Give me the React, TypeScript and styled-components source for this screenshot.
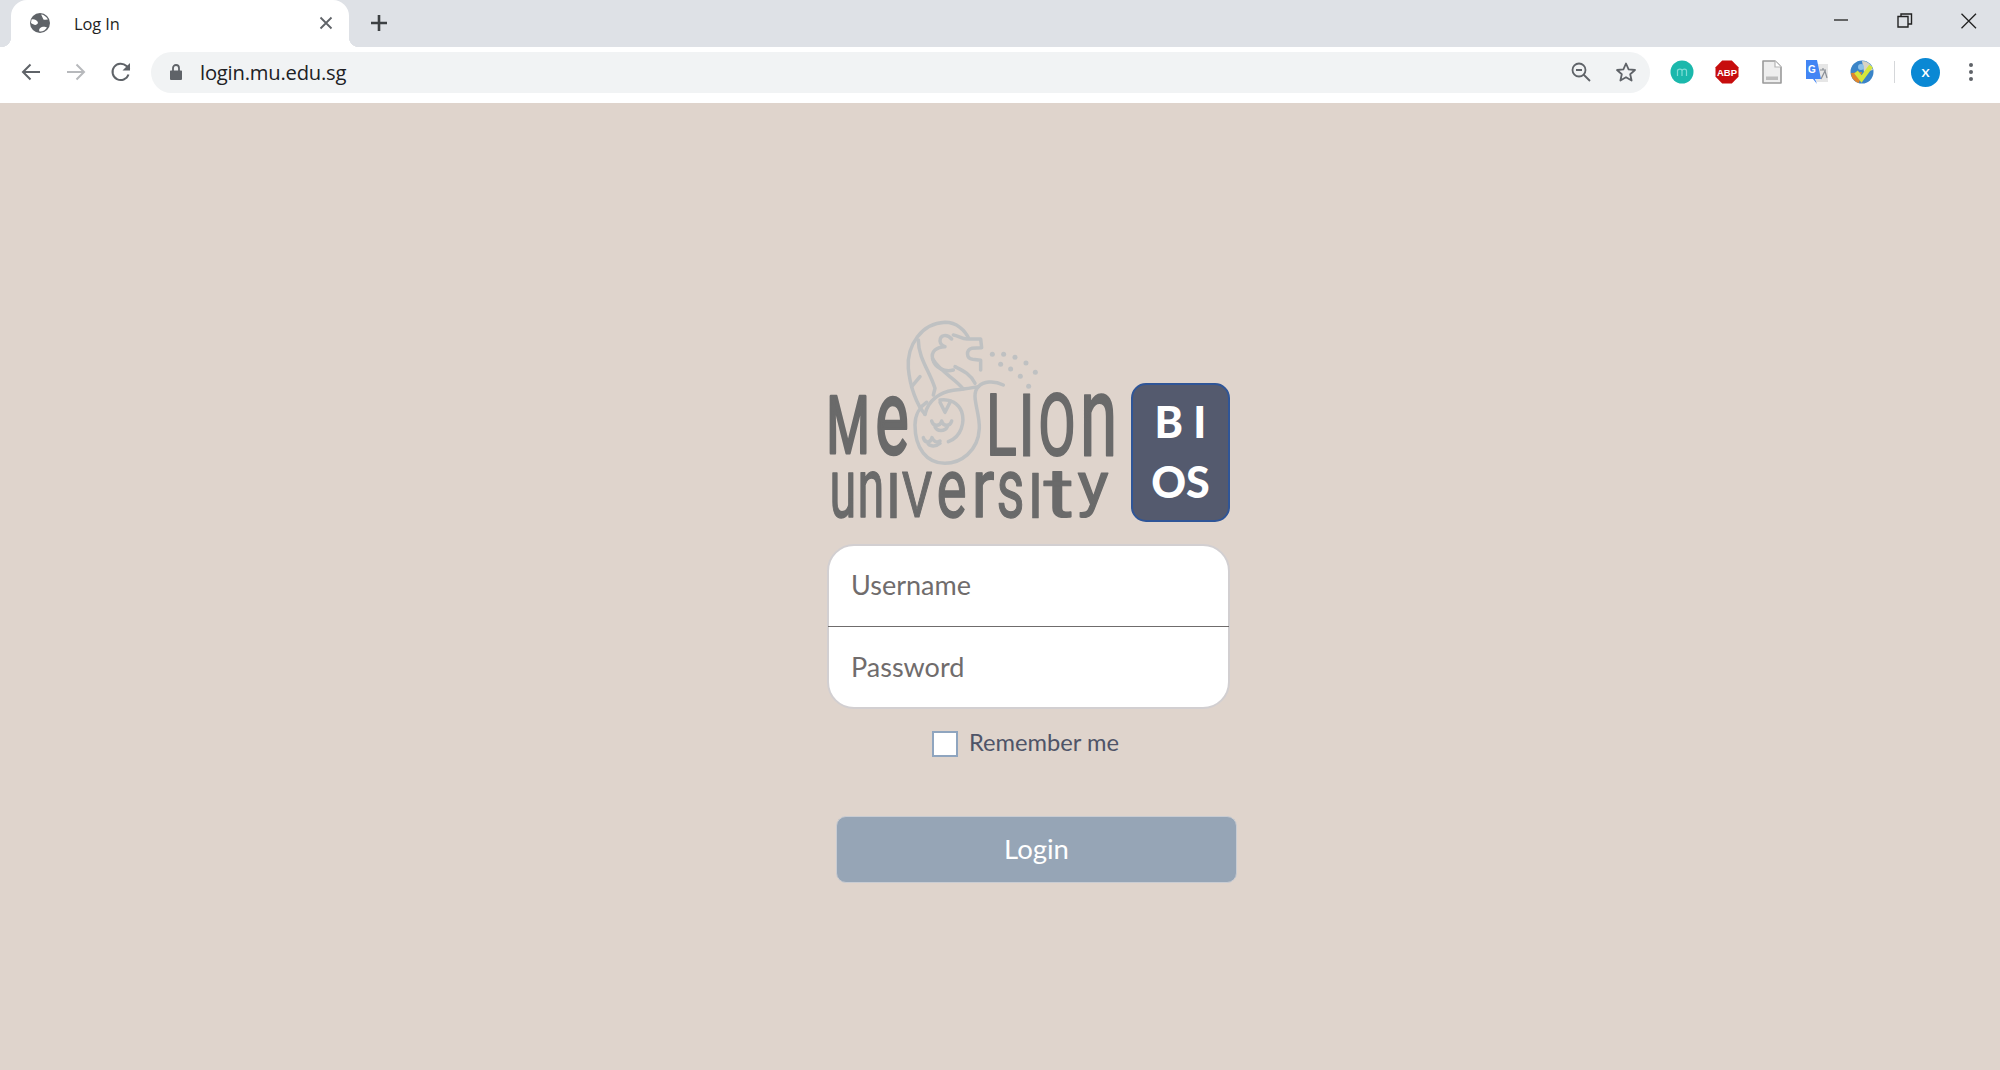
import React from "react";
import styled, { createGlobalStyle } from "styled-components";

const Global = createGlobalStyle`
  html, body { margin: 0; padding: 0; height: 1070px; overflow: hidden; background: #dfd4cc; }
  * { box-sizing: border-box; }
`;

const Page = styled.div`
  width: 2000px; height: 1070px; display: flex; flex-direction: column;
  font-family: "Lato", "Liberation Sans", sans-serif;
`;
const TabStrip = styled.div`
  height: 47px; background: #dee1e6; display: flex; align-items: stretch; padding-left: 11px;
`;
const Tab = styled.div`
  width: 338px; background: #fff; border-radius: 16px 16px 0 0; display: flex; align-items: center;
  padding: 0 16px 1px 18px; position: relative;
  &::before, &::after { content: ""; position: absolute; bottom: 0; width: 10px; height: 10px; background: #fff; }
  &::before { left: -10px; -webkit-mask: radial-gradient(circle at 0 0, transparent 10px, #000 10.5px); mask: radial-gradient(circle at 0 0, transparent 10px, #000 10.5px); }
  &::after { right: -10px; -webkit-mask: radial-gradient(circle at 100% 0, transparent 10px, #000 10.5px); mask: radial-gradient(circle at 100% 0, transparent 10px, #000 10.5px); }
`;
const TabTitle = styled.span`
  font-family: "Open Sans", sans-serif; font-size: 16.4px; color: #1f1f1f; margin-left: 23px; flex: 1; letter-spacing: -0.1px;
`;
const NewTab = styled.div`
  width: 22px; height: 22px; margin: 14px 0 0 21px; display: flex;
`;
const WindowControls = styled.div`
  margin-left: auto; display: flex; align-items: flex-start; gap: 44px; padding: 13px 21px 0 0;
`;
const Toolbar = styled.div`
  height: 56px; background: #fff; display: flex; align-items: center; padding: 0 0 6px 20px;
`;
const NavIcons = styled.div`
  display: flex; align-items: center; gap: 23px; margin-right: 19px;
`;
const Omnibox = styled.div`
  width: 1499px; height: 41px; background: #f1f3f4; border-radius: 21px; display: flex; align-items: center;
  padding: 0 13px 0 18px;
`;
const Url = styled.span`
  font-family: "Open Sans", sans-serif; font-size: 20.2px; color: #202124; margin-left: 17px; flex: 1; letter-spacing: -0.2px;
`;
const OmniActions = styled.div`
  display: flex; align-items: center; gap: 24px;
`;
const Extensions = styled.div`
  display: flex; align-items: center; gap: 21px; margin-left: 20px;
`;
const Divider = styled.div`
  width: 1px; height: 22px; background: #d5d7da; margin: 0 -5px 0 -1px;
`;
const Menu = styled.div`
  margin-left: 7px; display: flex;
`;
const Main = styled.main`
  flex: 1; background: #dfd4cc; display: flex; justify-content: center; padding: 217px 0 0 62px;
`;
const Column = styled.div`
  width: 412px; display: flex; flex-direction: column;
`;
const LogoRow = styled.div`
  display: flex; align-items: flex-end; gap: 6px; height: 202px;
`;
const Badge = styled.div`
  width: 99px; height: 139px; background: #545a6e; border: 2px solid #2f5597; border-radius: 15px;
  color: #fff; font-family: "Lato", sans-serif; font-weight: 900; font-size: 43px; line-height: 60px;
  text-align: center; padding: 7px 8px 0; margin-bottom: 0;
`;
const Card = styled.div`
  width: 403px; height: 165px; margin: 22px 0 0 2px; background: #fff; border: 2px solid #d2cfd1; border-radius: 27px;
  display: flex; flex-direction: column; position: relative;
`;
const Field = styled.input<{ $nudge: number }>`
  flex: 1 1 0; min-height: 0; width: 100%; border: 0; outline: 0; background: transparent;
  padding: ${(p) => p.$nudge}px 0 2px 22px;
  font-family: "Lato", sans-serif; font-size: 27px; color: #706c6c;
  &::placeholder { color: #706c6c; opacity: 1; }
`;
const Rule = styled.div`
  height: 1.5px; background: #6f6c6c; margin: 0 -1px; flex: none;
`;
const Remember = styled.label`
  display: flex; align-items: center; margin: 22px 0 0 107px; height: 26px;
  font-size: 23.7px; color: #4f5468;
`;
const RememberText = styled.span`
  margin-top: -4px;
`;
const Check = styled.span`
  width: 26px; height: 26px; background: #fff; border: 2px solid #8fa5bf; margin-right: 11px; flex: none;
`;
const LoginButton = styled.button`
  width: 401px; height: 67px; margin: 59px 0 0 11px; background: #96a5b6; border: 1.5px solid #c9ccd2; border-radius: 10px;
  color: #fff; font-family: "Lato", sans-serif; font-size: 27.5px; padding: 0 0 2px;
`;
const LogoSvg = styled.svg`
  display: block; flex: none;
`;
const Ink = styled.text`
  fill: #6a6a6a; stroke: #6a6a6a; stroke-linejoin: round; font-family: "Roboto", "Liberation Sans", sans-serif; font-weight: 400;
`;

// letter, left, right, top, bottom, stroke, width factor (glyph advance / drawn width)
type G = [string, number, number, number, number, number, number];
const letters: G[] = [
  ["M", 828, 868, 395, 454, 3, 1.08],
  ["e", 877, 907, 395, 455, 2.6, 1.12],
  ["L", 988, 1015, 393, 456, 2, 1.14],
  ["I", 1023, 1030, 393, 456, 1, 2.6],
  ["O", 1040, 1074, 393, 456, 2.2, 1.1],
  ["n", 1083, 1114, 393, 456, 2.2, 1.2],
  ["u", 832, 854, 472, 518, 1.3, 1.22],
  ["n", 860, 882, 472, 518, 1.3, 1.22],
  ["I", 890, 897, 472, 518, 0.6, 2.4],
  ["V", 902, 932, 472, 518, 1.2, 1.02],
  ["e", 938, 965, 472, 518, 1.3, 1.12],
  ["r", 973, 993, 472, 518, 1.3, 1.15],
  ["s", 998, 1023, 472, 518, 1.3, 1.12],
  ["I", 1032, 1039, 472, 518, 0.6, 2.4],
  ["t", 1045, 1073, 472, 518, 1.2, 1.08],
  ["y", 1078, 1108, 472, 518, 1.2, 1.04],
];
const ratio = (c: string) =>
  c === "y" ? 0.74 : c === "t" ? 0.66 : c === c.toLowerCase() ? 0.54 : 0.711;

const Logo = () => (
  <LogoSvg width={300} height={202} viewBox="825 320 300 202">
    {letters.map(([c, l, r, t, b, s, k], i) => {
      const fs = (b - t - s) / ratio(c);
      const w = (r - l) * k;
      const base = (c === "y" ? b - 0.21 * fs : b) - s / 2;
      return (
        <Ink key={i} x={(l + r) / 2 - w / 2} y={base} fontSize={fs} textLength={w} lengthAdjust="spacingAndGlyphs" strokeWidth={s}>
          {c}
        </Ink>
      );
    })}
    <g transform="translate(890 315) scale(0.3333)" fill="none" stroke="#bfc1c2" strokeWidth={10.5} strokeLinecap="round" strokeLinejoin="round">
      <path d="M105 298C80 270 60 215 55 160C50 90 95 25 165 22C200 22 225 45 237 72L272 72L275 98L245 100C228 105 228 130 248 133L272 136L272 165" />
      <path d="M190 60C205 62 215 72 232 72" />
      <path d="M185 72C170 55 150 60 150 78C150 90 165 95 165 95C140 95 122 110 128 132C135 160 165 172 190 165" />
      <path d="M85 75C85 130 120 170 135 220L130 240" />
      <path d="M128 132C150 170 195 190 220 222M195 155C215 165 240 175 255 205" />
      <path d="M90 185L65 215" />
      <path d="M340 210C310 195 280 200 265 215C240 240 270 290 268 340C265 410 210 445 165 445C110 445 75 400 75 330C75 300 90 275 110 262" />
      <path d="M105 298C115 255 150 232 190 226C215 222 245 220 265 215" />
      <path d="M175 380C215 365 225 320 215 290C205 265 180 250 150 255" />
      <path d="M150 262L165 292L182 258" />
      <path d="M125 318C130 335 150 335 155 318C160 335 180 335 185 318M135 335C140 350 165 350 172 335" />
      <path d="M100 368C105 385 122 385 126 368C130 378 140 385 150 378M112 382C118 396 138 396 150 385" />
      <g fill="#bfc1c2" stroke="none">
        {[[307,118],[341,118],[375,127],[408,144],[436,172],[332,148],[362,162],[391,184],[416,214]].map(([x,y]) => (
          <circle key={x} cx={x} cy={y} r={7.5} />
        ))}
      </g>
    </g>
  </LogoSvg>
);

const Icon = styled.svg`
  display: block; flex: none;
`;

const Globe = () => (
  <Icon width={22} height={22} viewBox="0 0 22 22">
    <circle cx="11" cy="11" r="10" fill="#5f6368" />
    <path d="M2.5 7.5C5 6.5 7.5 8 8.5 9.5C9.5 11 8.5 12 7.5 12.5C6.5 13.5 4 12.5 2 11ZM12 2.5C14.5 2.5 17.5 4.5 19 7.5C17 7 15.5 8.5 14.5 7.5C13.5 6 13.5 4.5 12 2.5ZM10.5 19.5C9.5 17.5 11 15.5 13 15C15 14.5 17 15 18 15.5C16.5 18 13.5 20 10.5 19.5Z" fill="#fff" />
  </Icon>
);

export default function App() {
  return (
    <Page>
      <Global />
      <TabStrip>
        <Tab>
          <Globe />
          <TabTitle>Log In</TabTitle>
          <Icon width={14} height={14} viewBox="0 0 14 14"><path d="M1.5 1.5L12.5 12.5M12.5 1.5L1.5 12.5" stroke="#5f6368" strokeWidth={1.8} /></Icon>
        </Tab>
        <NewTab>
          <Icon width={18} height={18} viewBox="0 0 18 18"><path d="M9 1V17M1 9H17" stroke="#3c4043" strokeWidth={2.6} /></Icon>
        </NewTab>
        <WindowControls>
          <Icon width={20} height={14} viewBox="0 0 20 14"><path d="M3 7H17" stroke="#444" strokeWidth={1.6} /></Icon>
          <Icon width={20} height={16} viewBox="0 0 20 16"><path d="M3 3.5H13V14H3ZM6 3.5V1H16.5V11H13" fill="none" stroke="#222" strokeWidth={1.4} /></Icon>
          <Icon width={20} height={16} viewBox="0 0 20 16"><path d="M2.5 .8L17 15.2M17 .8L2.5 15.2" stroke="#222" strokeWidth={1.3} /></Icon>
        </WindowControls>
      </TabStrip>
      <Toolbar>
        <NavIcons>
          <Icon width={22} height={22} viewBox="0 0 22 22"><path d="M20 11H3M10.5 3.5L3 11L10.5 18.5" fill="none" stroke="#5f6368" strokeWidth={2} /></Icon>
          <Icon width={22} height={22} viewBox="0 0 22 22"><path d="M2 11H19M11.5 3.5L19 11L11.5 18.5" fill="none" stroke="#b7b9bc" strokeWidth={2} /></Icon>
          <Icon width={22} height={22} viewBox="0 0 22 22"><path d="M18.5 13.5A8.2 8.2 0 1 1 16.5 5L19.5 8" fill="none" stroke="#5f6368" strokeWidth={2} /><path d="M20 2V9.5H12.5Z" fill="#5f6368" /></Icon>
        </NavIcons>
        <Omnibox>
          <Icon width={14} height={18} viewBox="0 0 14 18"><path d="M1.5 7.5H12.5A1 1 0 0 1 13 8.5V16A1 1 0 0 1 12 17H2A1 1 0 0 1 1 16V8.5A1 1 0 0 1 1.5 7.5Z" fill="#5f6368" /><path d="M4 8V5A3 3 0 0 1 10 5V8" fill="none" stroke="#5f6368" strokeWidth={1.8} /></Icon>
          <Url>login.mu.edu.sg</Url>
          <OmniActions>
            <Icon width={20} height={20} viewBox="0 0 20 20"><circle cx="8" cy="8" r="6.5" fill="none" stroke="#5f6368" strokeWidth={1.8} /><path d="M5 8H11M12.5 12.5L19 19" stroke="#5f6368" strokeWidth={1.8} /></Icon>
            <Icon width={22} height={22} viewBox="0 0 22 22"><path d="M11 2.5L13.6 8.4L20 9L15.2 13.2L16.6 19.5L11 16.2L5.4 19.5L6.8 13.2L2 9L8.4 8.4Z" fill="none" stroke="#5f6368" strokeWidth={1.8} strokeLinejoin="round" /></Icon>
          </OmniActions>
        </Omnibox>
        <Extensions>
          <Icon width={24} height={24} viewBox="0 0 24 24">
            <circle cx="12" cy="12" r="11.5" fill="#1bb8ac" />
            <path d="M7.5 16V9.5M7.5 11C8 8.5 12 8.5 12 11V16M12 11C12.5 8.5 16.5 8.5 16.5 11V16" fill="none" stroke="#7fdcd5" strokeWidth={1.2} />
          </Icon>
          <Icon width={24} height={24} viewBox="0 0 24 24">
            <path d="M7.2 .5H16.8L23.5 7.2V16.8L16.8 23.5H7.2L.5 16.8V7.2Z" fill="#c70d0d" />
            <text x="12" y="16" textAnchor="middle" fontFamily="Liberation Sans, sans-serif" fontWeight="700" fontSize="9.5" fill="#fff">ABP</text>
          </Icon>
          <Icon width={24} height={24} viewBox="0 0 24 24">
            <path d="M3 1H15L21 7V23H3Z" fill="#eeeeee" stroke="#9a9a9a" strokeWidth={1.6} strokeLinejoin="round" />
            <path d="M15 1V7H21" fill="#fff" stroke="#b5b5b5" strokeWidth={1.2} />
            <path d="M6 16.5H18V20H6Z" fill="#bdbdbd" />
          </Icon>
          <Icon width={24} height={26} viewBox="0 0 24 26">
            <path d="M11 5H23V23H11Z" fill="#e6e6e6" />
            <path d="M15 11H21M18 9V11M16 20L20 12L22 19" fill="none" stroke="#8a8f96" strokeWidth={1.2} />
            <path d="M1 1H12L16 20H10L12 25L8 20H1Z" fill="#4285f4" />
            <text x="7" y="13.5" textAnchor="middle" fontFamily="Liberation Sans, sans-serif" fontWeight="700" fontSize="10" fill="#fff">G</text>
          </Icon>
          <Icon width={24} height={24} viewBox="0 0 24 24">
            <circle cx="12" cy="12" r="11.5" fill="#3a84c8" />
            <path d="M1 13A11 11 0 0 0 9 23L12 12Z" fill="#e0862b" />
            <path d="M12 1A11 11 0 0 1 23 10L14 12Z" fill="#d9d3c4" />
            <circle cx="11" cy="7" r="3" fill="#8ec2e8" />
            <path d="M6 12L11.5 19L21 6" fill="none" stroke="#d5e63c" strokeWidth={4.5} />
          </Icon>
          <Divider />
          <Icon width={29} height={29} viewBox="0 0 29 29">
            <circle cx="14.5" cy="14.5" r="14.5" fill="#0a88d4" />
            <text x="14.5" y="19" textAnchor="middle" fontFamily="Lato, sans-serif" fontWeight="700" fontSize="12" fill="#fff">X</text>
          </Icon>
          <Menu>
            <Icon width={6} height={20} viewBox="0 0 6 20"><g fill="#5f6368"><circle cx="3" cy="3" r="2" /><circle cx="3" cy="10" r="2" /><circle cx="3" cy="17" r="2" /></g></Icon>
          </Menu>
        </Extensions>
      </Toolbar>
      <Main>
        <Column>
          <LogoRow>
            <Logo />
            <Badge>B I OS</Badge>
          </LogoRow>
          <Card>
            <Field $nudge={0} placeholder="Username" />
            <Rule />
            <Field $nudge={0} placeholder="Password" />
          </Card>
          <Remember>
            <Check />
            <RememberText>Remember me</RememberText>
          </Remember>
          <LoginButton>Login</LoginButton>
        </Column>
      </Main>
    </Page>
  );
}
